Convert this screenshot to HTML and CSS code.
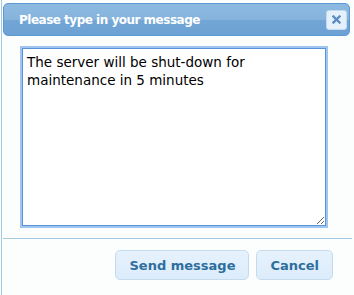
FILE: index.html
```html
<!DOCTYPE html>
<html lang="en">
<head>
  <meta charset="UTF-8" />
  <title>Message dialog</title>
  <link rel="stylesheet" href="styles.css">
</head>
<body>

  <div class="dialog">
    <div class="dialog-titlebar">
      <span class="dialog-title">Please type in your message</span>
      <a href="#" class="dialog-close" title="close">
        <svg width="9" height="9" viewBox="0 0 9 9">
          <path d="M1.5 1.5 L7.5 7.5 M7.5 1.5 L1.5 7.5" stroke="#5a8cc4" stroke-width="2.4" stroke-linecap="square" />
        </svg>
      </a>
    </div>

    <div class="dialog-content">
      <textarea class="message-box">The server will be shut-down for maintenance in 5 minutes</textarea>
    </div>

    <div class="dialog-buttonpane">
      <button class="btn">Send message</button>
      <button class="btn">Cancel</button>
    </div>
  </div>

</body>
</html>
```

FILE: styles.css
```css
body {
  margin: 0;
  padding: 0;
  background: #fcfdfd;
  font-family: 'DejaVu Sans', Verdana, sans-serif;
  overflow: hidden;
}

.dialog {
  margin: -1px 0 0 1px;
  width: 349px;
  height: 300px;
  padding: 4px 0 0 1px;
  border-left: 1px solid #a6c9e2;
  background: #fcfdfd;
}

.dialog-titlebar {
  display: flex;
  align-items: center;
  justify-content: space-between;
  height: 31px;
  margin-right: 2px;
  padding: 0 2px 0 15px;
  border: 1px solid #5d9ad3;
  border-radius: 5px;
  background: linear-gradient(to bottom, #8dbae0 0%, #86b3dc 50%, #73a6d6 52%, #6ca1d4 100%);
}

.dialog-title {
  color: #fff;
  font-weight: bold;
  font-size: 12px;
  letter-spacing: -0.5px;
}

.dialog-close {
  display: flex;
  align-items: center;
  justify-content: center;
  width: 19px;
  height: 18px;
  border: 1px solid #c5dbec;
  border-radius: 3px;
  background: #e4f0fb;
  text-decoration: none;
}

.dialog-content {
  padding: 12px 0 0 19px;
}

.message-box {
  display: block;
  box-sizing: border-box;
  width: 304px;
  height: 178px;
  margin: 0;
  padding: 4px 4px;
  border: 1px solid #5b93d9;
  box-shadow: 0 0 0 2px #9fc5f1;
  outline: none;
  resize: both;
  background: #fff;
  color: #000;
  font-family: 'DejaVu Sans', Verdana, sans-serif;
  font-size: 13.5px;
  line-height: 18px;
}

.dialog-buttonpane {
  display: flex;
  justify-content: flex-end;
  gap: 7px;
  margin-top: 12px;
  padding: 11px 19px 0 0;
  border-top: 1px solid #a6c9e2;
}

.btn {
  height: 30px;
  margin: 0;
  padding: 0 13px;
  border: 1px solid #c5dbec;
  border-radius: 5px;
  background: linear-gradient(to bottom, #e6f2fd 0%, #dcecfb 100%);
  color: #2e6e9e;
  font-family: 'DejaVu Sans', Verdana, sans-serif;
  font-weight: bold;
  font-size: 13px;
  cursor: pointer;
}
```
